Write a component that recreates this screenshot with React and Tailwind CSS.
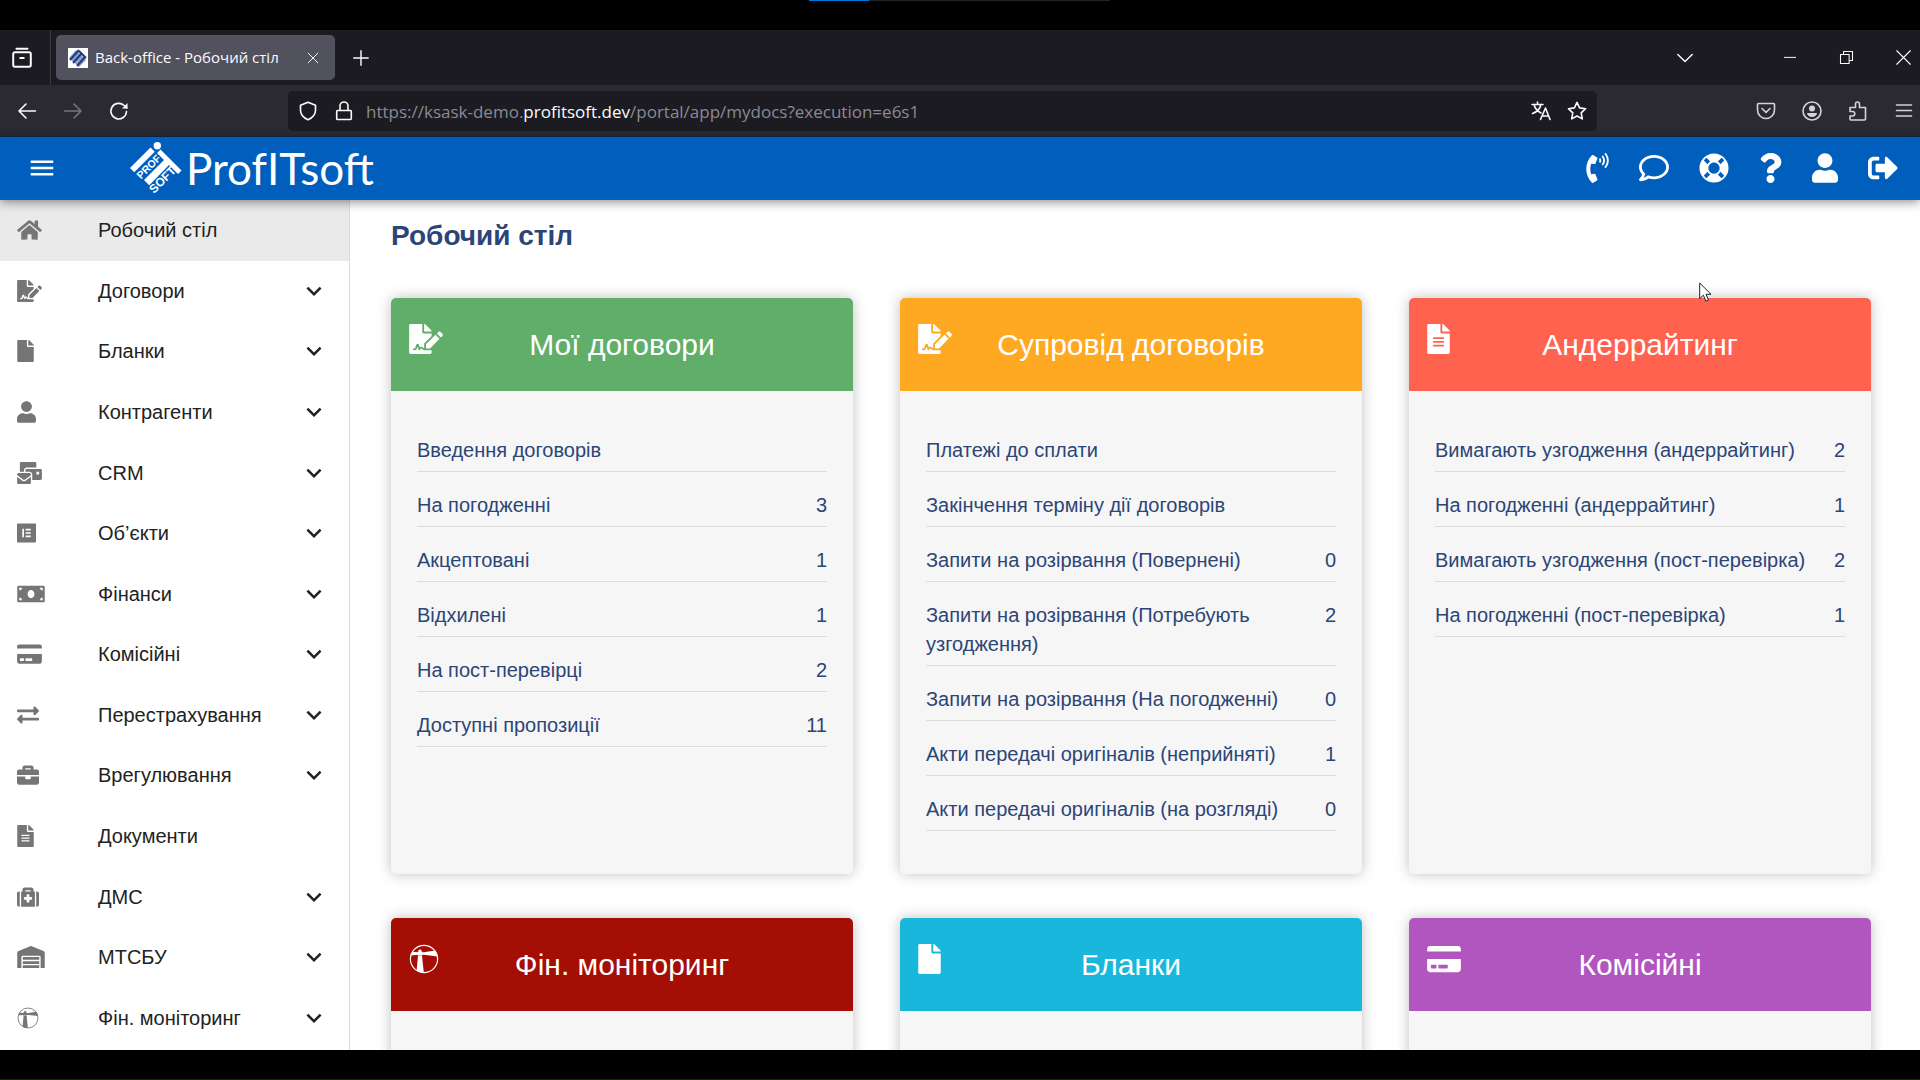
import {
    FaHome, FaFileSignature, FaFile, FaUser, FaMailBulk, FaElementor, FaMoneyBill, FaCreditCard,
    FaExchangeAlt, FaBriefcase, FaFileAlt, FaMedkit, FaWarehouse, FaPhoneVolume, FaRegComment,
    FaLifeRing, FaQuestion, FaSignOutAlt,
} from "react-icons/fa";
import {MdMenu, MdExpandMore} from "react-icons/md";

const Lighthouse = ({className}) => (
    <svg viewBox="0 0 30 30" className={className} fill="currentColor">
        <circle cx="15" cy="15" r="13.6" fill="none" stroke="currentColor" strokeWidth="1.2"/>
        <path d="M7.600 26.800 L9 11.800 H13 L14.800 28.400 Q10.500 28.800 7.600 26.800 Z"/>
        <path d="M8.400 11.600 V8 L9.400 7.600 V6.400 L11 5.200 L12.600 6.400 V7.600 L13.600 8 V11.600 Z"/>
        <path d="M13 8.400 L26.400 6.600 Q28.200 9 28.600 12.400 L13 10.400 Z"/>
        <path d="M9 10.800 L1.800 11.400 Q2.400 9.400 3.400 7.800 L9 8.200 Z"/>
    </svg>
);

const menu = [
    {label: "Робочий стіл", icon: FaHome, size: "w-[25px]", active: true, leaf: true},
    {label: "Договори", icon: FaFileSignature, size: "w-[25px]"},
    {label: "Бланки", icon: FaFile, size: "w-[17px]"},
    {label: "Контрагенти", icon: FaUser, size: "w-[19px]"},
    {label: "CRM", icon: FaMailBulk, size: "w-[25px]"},
    {label: "Об’єкти", icon: FaElementor, size: "w-[19px]"},
    {label: "Фінанси", icon: FaMoneyBill, size: "w-[28px]"},
    {label: "Комісійні", icon: FaCreditCard, size: "w-[25px]"},
    {label: "Перестрахування", icon: FaExchangeAlt, size: "w-[22px]"},
    {label: "Врегулювання", icon: FaBriefcase, size: "w-[22px]"},
    {label: "Документи", icon: FaFileAlt, size: "w-[17px]", leaf: true},
    {label: "ДМС", icon: FaMedkit, size: "w-[22px]"},
    {label: "МТСБУ", icon: FaWarehouse, size: "w-[28px]"},
    {label: "Фін. моніторинг", icon: Lighthouse, size: "w-[22px]"},
];

const cards = [
    {
        title: "Мої договори", icon: FaFileSignature, size: "w-[34px]", color: "bg-[#60ae69]",
        rows: [
            ["Введення договорів"],
            ["На погодженні", 3],
            ["Акцептовані", 1],
            ["Відхилені", 1],
            ["На пост-перевірці", 2],
            ["Доступні пропозиції", 11],
        ],
    },
    {
        title: "Супровід договорів", icon: FaFileSignature, size: "w-[34px]", color: "bg-[#ffa822]",
        rows: [
            ["Платежі до сплати"],
            ["Закінчення терміну дії договорів"],
            ["Запити на розірвання (Повернені)", 0],
            ["Запити на розірвання (Потребують узгодження)", 2],
            ["Запити на розірвання (На погодженні)", 0],
            ["Акти передачі оригіналів (неприйняті)", 1],
            ["Акти передачі оригіналів (на розгляді)", 0],
        ],
    },
    {
        title: "Андеррайтинг", icon: FaFileAlt, size: "w-[23px]", color: "bg-[#ff624f]",
        rows: [
            ["Вимагають узгодження (андеррайтинг)", 2],
            ["На погодженні (андеррайтинг)", 1],
            ["Вимагають узгодження (пост-перевірка)", 2],
            ["На погодженні (пост-перевірка)", 1],
        ],
    },
    {title: "Фін. моніторинг", icon: Lighthouse, size: "w-[30px]", color: "bg-[#a50e04]", rows: []},
    {title: "Бланки", icon: FaFile, size: "w-[23px]", color: "bg-[#1ab7dd]", rows: []},
    {title: "Комісійні", icon: FaCreditCard, size: "w-[34px]", color: "bg-[#b056be]", rows: []},
];

const actions = [
    {label: "Дзвінок", icon: FaPhoneVolume, size: "w-[23px]"},
    {label: "Повідомлення", icon: FaRegComment, size: "w-[30px]"},
    {label: "Підтримка", icon: FaLifeRing, size: "w-[30px]"},
    {label: "Довідка", icon: FaQuestion, size: "w-[23px]"},
    {label: "Профіль", icon: FaUser, size: "w-[26px]"},
    {label: "Вийти", icon: FaSignOutAlt, size: "w-[30px]"},
];

// thin line icons of the browser window
const Line = ({children, className = "size-5", width = 1.6}) => (
    <svg viewBox="0 0 20 20" className={className} fill="none" stroke="currentColor" strokeWidth={width}
         strokeLinecap="round" strokeLinejoin="round">
        {children}
    </svg>
);

const IconButton = ({label, className = "", children}) => (
    <button type="button" aria-label={label} className={`flex items-center justify-center ${className}`}>
        {children}
    </button>
);

const TabStrip = () => (
    <div className="h-[55px] shrink-0 flex items-center bg-[#1c1b22] text-[#fbfbfe]">
        <IconButton label="Recent tabs" className="w-[51px] h-full pr-1.5 border-r border-[#3a3944]">
            <Line className="size-[22px]" width={1.8}>
                <path d="M5 1.6h10M3.6 4.8h12.8a1.6 1.6 0 0 1 1.6 1.6v10a1.6 1.6 0 0 1-1.6 1.6H3.6A1.6 1.6 0 0 1 2 16.4V6.4a1.6 1.6 0 0 1 1.6-1.6zM8.4 10h3.2"/>
            </Line>
        </IconButton>
        <div className="ml-[5px] h-[45px] w-[279px] flex items-center rounded-[5px] bg-[#52525e] pl-3 pr-4">
            <svg viewBox="0 0 20 20" className="size-5 shrink-0 bg-white">
                <path d="M1 10 L8 2 L18 12 L11 19 Z" fill="#8ea0cc"/>
                <path d="M2 12 L11 2 M5 15 L14 5 M9 18 L17 9" stroke="#1f3a7a" strokeWidth="2"/>
                <path d="M11 3 L18 10" stroke="#1f3a7a" strokeWidth="2"/>
            </svg>
            <span className="ml-[7px] flex-1 whitespace-nowrap text-[15px]">Back-office - Робочий стіл</span>
            <IconButton label="Close tab">
                <Line className="size-3" width={1.6}><path d="M2 2l16 16M18 2L2 18"/></Line>
            </IconButton>
        </div>
        <IconButton label="New tab" className="ml-[17px]">
            <Line className="size-[18px]"><path d="M10 2v16M2 10h16"/></Line>
        </IconButton>
        <div className="ml-auto flex items-center">
            <IconButton label="List tabs" className="w-10 mr-14">
                <Line className="size-[18px]"><path d="M2 6l8 8 8-8"/></Line>
            </IconButton>
            <IconButton label="Minimize" className="w-[57px]">
                <Line className="size-3" width={1.6}><path d="M0 9h20"/></Line>
            </IconButton>
            <IconButton label="Restore" className="w-[57px]">
                <Line className="size-[15px]" width={1.4}>
                    <path d="M2 6h11.5v12H2zM6 6V2h12v12h-4.5"/>
                </Line>
            </IconButton>
            <IconButton label="Close" className="w-[57px] -mr-3">
                <Line className="size-[15px]" width={1.5}><path d="M1 1l18 18M19 1L1 19"/></Line>
            </IconButton>
        </div>
    </div>
);

const AddressBar = () => (
    <div className="h-[52px] shrink-0 flex items-center bg-[#2b2a33] border-b border-[#0c2b52] text-[#fbfbfe]">
        <div className="w-[288px] flex items-center gap-[26px] pl-[17px]">
            <IconButton label="Back">
                <Line><path d="M18.5 10H2M9 3L2 10l7 7"/></Line>
            </IconButton>
            <IconButton label="Forward" className="text-[#76757e]">
                <Line><path d="M1.5 10H18M11 3l7 7-7 7"/></Line>
            </IconButton>
            <IconButton label="Reload">
                <Line>
                    <path d="M17.5 10.5a7.8 7.8 0 1 1-2.4-6L18 7"/>
                    <path d="M18.5 2v5.5H13z" fill="currentColor" stroke="none"/>
                </Line>
            </IconButton>
        </div>
        <div className="h-10 flex-1 flex items-center rounded-[5px] bg-[#1c1b22] px-2.5">
            <Line><path d="M10 1.200l7.500 3v5c0 4-3 7.500-7.500 9.600C5.500 16.700 2.500 13.200 2.500 9.200v-5z"/></Line>
            <Line className="ml-4 size-5">
                <path d="M3.500 9.500h13a.8.8 0 0 1 .8.8v7.400a.8.8 0 0 1-.8.8h-13a.8.8 0 0 1-.8-.8v-7.400a.8.8 0 0 1 .8-.8zM6 9.500V5a4 4 0 0 1 8 0v4.500"/>
            </Line>
            <a href="#url" className="ml-3 pt-0.5 whitespace-nowrap text-[17px] text-[#8b8a92]">
                https://ksask-demo.<span className="text-[#fbfbfe]">profitsoft.dev</span>/portal/app/mydocs?execution=e6s1
            </a>
            <IconButton label="Translate" className="ml-auto">
                <Line className="size-5">
                    <path d="M1 3.500h11M6.500 1v2.500M10 3.500C9 8 6 11 1.500 12.500M3 3.500c1 4 4 7 7 8.500M9.500 18.500L14.500 7l4.500 11.500M11.500 15h6"/>
                </Line>
            </IconButton>
            <IconButton label="Bookmark" className="ml-4">
                <Line className="size-5">
                    <path d="M10 1.400l2.600 5.500 6 .8-4.400 4.200 1.100 6L10 15l-5.300 2.900 1.100-6L1.400 7.700l6-.8z"/>
                </Line>
            </IconButton>
        </div>
        <div className="w-[323px] flex items-center justify-end gap-[26px] pr-1.5 text-[#d4d3da]">
            <IconButton label="Pocket">
                <Line>
                    <path d="M2.500 2.500h15a1 1 0 0 1 1 1V9a8.500 8.500 0 0 1-17 0V3.500a1 1 0 0 1 1-1zM6 7.500l4 3.800 4-3.800"/>
                </Line>
            </IconButton>
            <IconButton label="Account">
                <Line>
                    <circle cx="10" cy="10" r="9"/>
                    <circle cx="10" cy="7.5" r="3" fill="currentColor" stroke="none"/>
                    <path d="M5 12h10a5 4 0 0 1-10 0z" fill="currentColor" stroke="none"/>
                </Line>
            </IconButton>
            <IconButton label="Extensions">
                <Line>
                    <path d="M2 6.500h5.500V3a2 2 0 0 1 4 0v3.500h6V18a1 1 0 0 1-1 1H3a1 1 0 0 1-1-1v-3h2.500a2 2 0 0 0 0-4.500H2z"/>
                </Line>
            </IconButton>
            <IconButton label="Menu">
                <Line><path d="M2.500 4h15M2.500 9.500h15M2.500 15h15"/></Line>
            </IconButton>
        </div>
    </div>
);

const Logo = () => (
    <a href="#home" aria-label="ProfITsoft" className="ml-[73px] flex items-center gap-0.5 text-white">
        <svg viewBox="0 0 54 54" className="size-[54px]" fill="currentColor">
            <circle cx="27.3" cy="4.7" r="3.7"/>
            <path d="M0 27 L20.5 6.5 L24.75 10.75 L4.25 31.25 Z"/>
            <path d="M30.5 8.5 L51.500 29.500 L48 33 L39 24 L19.250 44.250 L14 39 L34 19 L27 12 Z"/>
            <text x="11" y="38.5" transform="rotate(-45 11 38.5)" fontSize="10.5" fontWeight="700"
                  fontFamily="Liberation Sans, sans-serif">PROF</text>
            <text x="24" y="53" transform="rotate(-45 24 53)" fontSize="12" fontWeight="700"
                  fontFamily="Liberation Sans, sans-serif">SOFT</text>
        </svg>
        <span className="font-['Lato',sans-serif] text-[44px] leading-[54px]">ProfITsoft</span>
    </a>
);

const Header = () => (
    <header className="relative z-10 h-[63px] shrink-0 flex items-center bg-[#005fbd] pb-0.5 pl-[27px] pr-[22px] text-white shadow-[0_2px_10px_rgba(0,0,0,0.45)]">
        <IconButton label="Меню"><MdMenu className="size-[30px]"/></IconButton>
        <Logo/>
        <div className="ml-auto flex items-center gap-[30px]">
            {actions.map(({label, icon: Icon, size}) => (
                <IconButton key={label} label={label}><Icon className={`h-[30px] ${size}`}/></IconButton>
            ))}
        </div>
    </header>
);

const Sidebar = () => (
    <nav className="w-[350px] shrink-0 border-r border-[#dcdcdc] bg-white pb-0.5">
        <ul className="h-full flex flex-col">
            {menu.map(({label, icon: Icon, size, active, leaf}) => (
                <li key={label} className="flex-1">
                    <a href="#section"
                       className={`h-full flex items-center pl-[17px] pr-5 text-[20px] text-[#222] ${active ? "bg-[#eaeaea]" : ""}`}>
                        <span className="w-[81px] shrink-0 text-[#757575]"><Icon className={`h-[22px] ${size}`}/></span>
                        <span className="flex-1 whitespace-nowrap">{label}</span>
                        {!leaf && <MdExpandMore className="size-[30px]"/>}
                    </a>
                </li>
            ))}
        </ul>
    </nav>
);

const Card = ({title, icon: Icon, size, color, rows}) => (
    <section className="flex flex-col rounded-[5px] bg-[#f6f6f6] shadow-[0_0_14px_rgba(0,0,0,0.25)]">
        <div className={`h-[93px] shrink-0 grid grid-cols-[1fr_auto_1fr] items-center rounded-t-[5px] px-[18px] text-white ${color}`}>
            <Icon className={`mb-3 h-[30px] ${size}`}/>
            <h2 className="text-[30px]">{title}</h2>
        </div>
        <ul className="px-[26px] pt-[26px] pb-[43px]">
            {rows.map(([label, count]) => (
                <li key={label} className="border-b border-[#dcdcdc] pt-[19px] pb-1.5">
                    <a href="#list" className="flex justify-between gap-6 text-[20px] leading-[29px] text-[#2c4577]">
                        <span>{label}</span>
                        <span>{count}</span>
                    </a>
                </li>
            ))}
        </ul>
    </section>
);

const App = () => (
    <div className="relative h-screen flex flex-col overflow-hidden bg-black py-[30px] font-['Liberation_Sans',Arial,sans-serif]">
        <div className="absolute top-0 left-[809px] flex h-px w-[301px] bg-[#222]">
            <div className="w-[60px] bg-[#0078d7]"/>
        </div>
        <div className="shrink-0 font-['Open_Sans','Noto_Sans',sans-serif]">
            <TabStrip/>
            <AddressBar/>
        </div>
        <Header/>
        <div className="min-h-0 flex-1 flex bg-white">
            <Sidebar/>
            <main className="min-w-0 flex-1 overflow-hidden pl-[41px] pr-[49px] pt-[18px]">
                <h1 className="text-[28px] leading-9 font-bold text-[#2c4577]">Робочий стіл</h1>
                <div className="mt-11 grid grid-cols-3 gap-x-[47px] gap-y-11">
                    {cards.map((card) => <Card key={card.title} {...card}/>)}
                </div>
            </main>
        </div>
        <div className="absolute bottom-0 h-px w-full bg-[#0a3000]"/>
        <svg viewBox="0 0 14 21" className="absolute top-[282px] left-[1699px] z-20 h-[21px] w-3.5">
            <path d="M.7 1v15.600l3.700-3.400 2.500 6 2.600-1.100-2.500-5.800h5z" fill="#fff" stroke="#222" strokeWidth="1"/>
        </svg>
    </div>
);

export default App;
